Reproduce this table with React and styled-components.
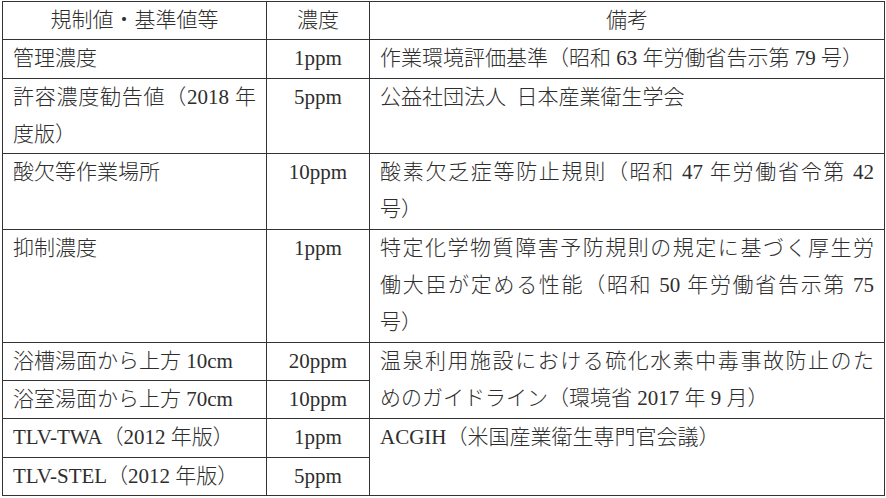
import styled, {createGlobalStyle} from 'styled-components'

const GlobalStyle = createGlobalStyle`
  html, body {
    margin: 0;
    padding: 0;
    background: #fff;
  }
  body {
    font-family: "Liberation Serif", "Noto Sans CJK JP", serif;
    color: #2e2e2e;
  }
`

const Page = styled.div`
  padding: 1px 0 0 2px;
`

const Table = styled.table`
  border-collapse: collapse;
  table-layout: fixed;
  width: 882px;
  font-size: 21px;
  font-weight: 300;
  line-height: 37.3px;
`

const HeadCell = styled.th`
  border: 1px solid #333;
  font-weight: 300;
  text-align: center;
  padding: 0;
`

const Cell = styled.td`
  border: 1px solid #333;
  vertical-align: top;
  padding: 0 10px;
  text-align: ${props => (props.$center ? 'center' : 'left')};
  white-space: nowrap;
`

const Line = styled.span`
  display: block;
  text-align-last: ${props => (props.$justify ? 'justify' : 'auto')};
  text-align: ${props => (props.$justify ? 'justify' : 'inherit')};
`

const rows = [
  {name: ['管理濃度'], value: '1ppm', note: ['作業環境評価基準（昭和 63 年労働省告示第 79 号）']},
  {name: ['許容濃度勧告値（2018 年', '度版）'], value: '5ppm', note: ['公益社団法人\u2002日本産業衛生学会']},
  {name: ['酸欠等作業場所'], value: '10ppm', note: ['酸素欠乏症等防止規則（昭和 47 年労働省令第 42', '号）']},
  {
    name: ['抑制濃度'],
    value: '1ppm',
    note: ['特定化学物質障害予防規則の規定に基づく厚生労', '働大臣が定める性能（昭和 50 年労働省告示第 75', '号）'],
  },
  {
    name: ['浴槽湯面から上方 10cm'],
    value: '20ppm',
    note: ['温泉利用施設における硫化水素中毒事故防止のた', 'めのガイドライン（環境省 2017 年 9 月）'],
    span: 2,
  },
  {name: ['浴室湯面から上方 70cm'], value: '10ppm'},
  {name: ['TLV-TWA（2012 年版）'], value: '1ppm', note: ['ACGIH（米国産業衛生専門官会議）'], span: 2},
  {name: ['TLV-STEL（2012 年版）'], value: '5ppm'},
]

const Lines = ({items}) =>
  items.map((text, i) => (
    <Line key={text} $justify={i < items.length - 1}>
      {text}
    </Line>
  ))

const App = () => (
  <Page>
    <GlobalStyle />
    <Table>
      <colgroup>
        <col style={{width: 264}} />
        <col style={{width: 103}} />
        <col style={{width: 515}} />
      </colgroup>
      <thead>
        <tr>
          <HeadCell>規制値・基準値等</HeadCell>
          <HeadCell>濃度</HeadCell>
          <HeadCell>備考</HeadCell>
        </tr>
      </thead>
      <tbody>
        {rows.map(row => (
          <tr key={row.name[0]}>
            <Cell>
              <Lines items={row.name} />
            </Cell>
            <Cell $center>{row.value}</Cell>
            {row.note && (
              <Cell rowSpan={row.span || 1}>
                <Lines items={row.note} />
              </Cell>
            )}
          </tr>
        ))}
      </tbody>
    </Table>
  </Page>
)

export default App
